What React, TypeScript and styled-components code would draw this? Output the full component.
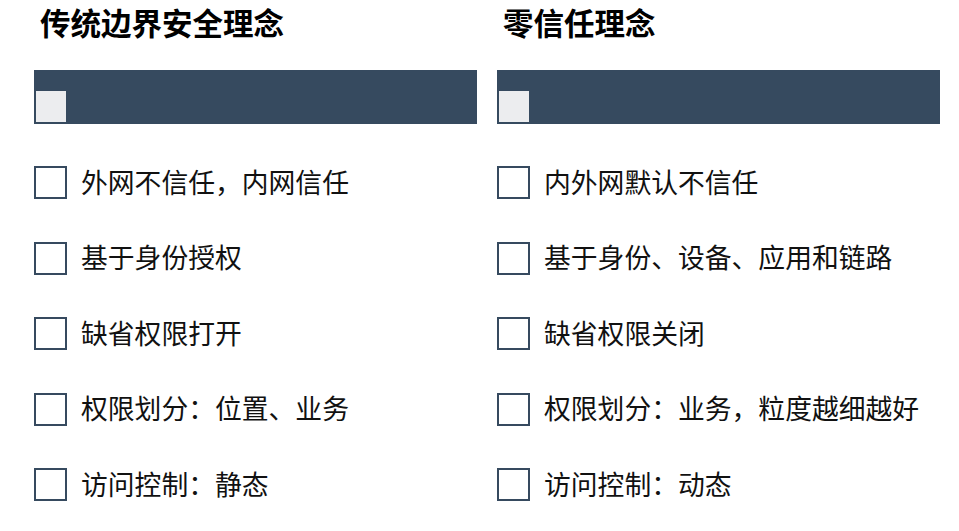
import styled, { createGlobalStyle } from 'styled-components';

const GlobalStyle = createGlobalStyle`
    body {
        margin: 0;
        background: #ffffff;
        font-family: "Noto Sans CJK SC", "Noto Sans", sans-serif;
        color: #111111;
    }
`;

const columns = [
    {
        title: '传统边界安全理念',
        items: ['外网不信任，内网信任', '基于身份授权', '缺省权限打开', '权限划分：位置、业务', '访问控制：静态'],
    },
    {
        title: '零信任理念',
        items: ['内外网默认不信任', '基于身份、设备、应用和链路', '缺省权限关闭', '权限划分：业务，粒度越细越好', '访问控制：动态'],
    },
];

const Page = styled.div`
    display: grid;
    grid-template-columns: 443px 443px;
    column-gap: 20px;
    padding-left: 34px;
    padding-top: 4px;
`;

const Column = styled.section`
    display: flex;
    flex-direction: column;
`;

const Title = styled.h2`
    margin: 0;
    padding-left: 6px;
    font-size: 30.5px;
    line-height: 36px;
    font-weight: 700;
    color: #000000;
`;

const HeaderBar = styled.div`
    margin-top: 30px;
    height: 54px;
    box-sizing: border-box;
    padding: 2px;
    background: #364a5f;
    display: flex;
    align-items: flex-end;
`;

const Handle = styled.div`
    width: 30px;
    height: 31px;
    background: #ecedef;
`;

const List = styled.ul`
    list-style: none;
    margin: 42px 0 0;
    padding: 0;
    display: flex;
    flex-direction: column;
    gap: 42.5px;
`;

const Row = styled.li`
    display: flex;
    align-items: center;
    gap: 14px;
    height: 33px;
`;

const Box = styled.span`
    width: 33px;
    height: 33px;
    box-sizing: border-box;
    border: 2px solid #364a5f;
    flex-shrink: 0;
`;

const Label = styled.span`
    font-size: 26.8px;
    line-height: 33px;
    padding-bottom: 3px;
    color: #111111;
    white-space: nowrap;
`;

export default function App() {
    return (
        <>
            <GlobalStyle />
            <Page>
                {columns.map((col) => (
                    <Column key={col.title}>
                        <Title>{col.title}</Title>
                        <HeaderBar>
                            <Handle />
                        </HeaderBar>
                        <List>
                            {col.items.map((item) => (
                                <Row key={item}>
                                    <Box />
                                    <Label>{item}</Label>
                                </Row>
                            ))}
                        </List>
                    </Column>
                ))}
            </Page>
        </>
    );
}
